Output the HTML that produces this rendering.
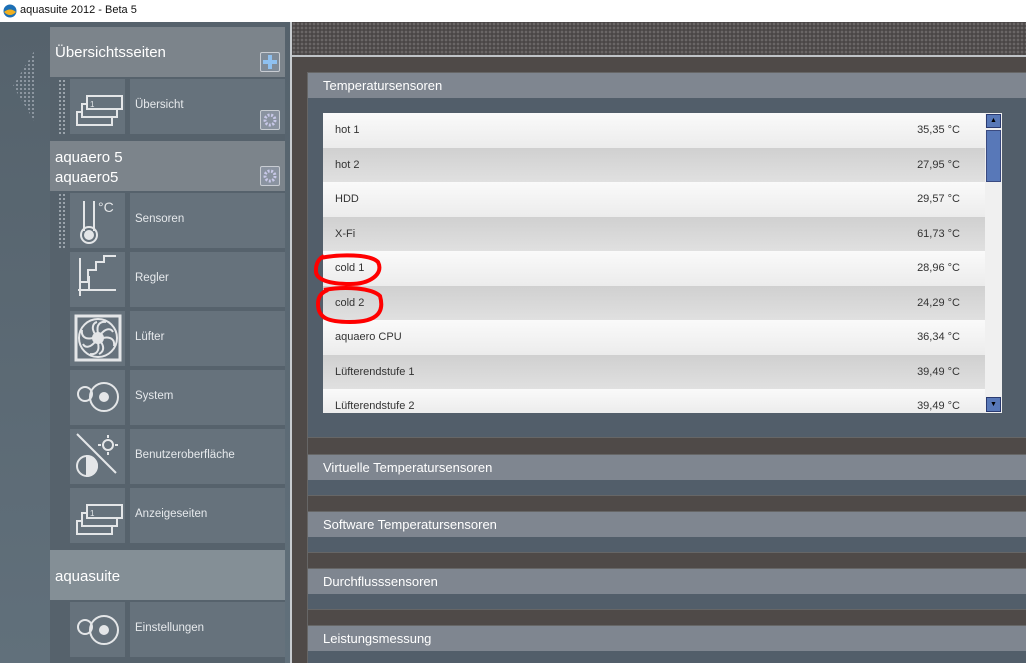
<!DOCTYPE html>
<html style="width:1026px;height:663px;overflow:hidden;background:#4f4a48"><head><meta charset="utf-8"><style>
*{margin:0;padding:0;box-sizing:border-box}
body{width:1026px;height:663px;overflow:hidden;position:relative;font-family:"Liberation Sans","DejaVu Sans",sans-serif;background:#4f4a48}
.a{position:absolute}
.tb{left:0;top:0;width:1026px;height:22px;background:#fff;font-size:11px;color:#111;padding:4px 0 0 20px}
.side{left:0;top:22px;width:290px;height:641px;background:linear-gradient(#55626c,#61707b)}
.col{left:50px;top:22px;width:235px;height:641px;background:#56626c}
.gh{left:50px;width:235px;height:50px;background:#7c848b;color:#fff;font-size:15px;padding:15px 0 0 5px;line-height:20px}
.ib{left:70px;width:55px;height:55px;background:#66727c}
.lb{left:130px;width:155px;height:55px;background:#66727c;color:#e6e9ec;font-size:11.5px;padding-top:20px;padding-left:5px}
.btn{width:20px;height:20px;border:1px solid #c8ccd2;border-radius:2px;background:#8a93a0}
.dots{background-image:radial-gradient(#9aa3ab 40%,transparent 45%);background-size:4px 4px}
.ph{left:307px;width:719px;height:26px;background:#7f8690;color:#fff;font-size:13px;padding:5px 0 0 16px;border-top:1px solid #666}
.pb{left:307px;width:719px;background:#525e6a}
.row{position:absolute;left:323px;width:662px;height:34.5px;font-size:11px;color:#333;padding:11px 0 0 12px}
.row span{position:absolute;right:25px;top:11px}
.r0{background:linear-gradient(#fafafa,#ececec)}
.r1{background:linear-gradient(#d0d0d0,#e0e0e0)}
svg{position:absolute}
</style></head><body>
<div class="a tb"><svg width="14" height="14" style="left:3px;top:4px"><circle cx="7" cy="7" r="6.5" fill="#1c6fb5"/><path d="M1 8 Q7 3 13 8 Q7 14 1 8z" fill="#f0b020"/></svg>aquasuite 2012 - Beta 5</div>
<div class="a side"></div>
<svg width="30" height="80" style="left:12px;top:48px"><defs><pattern id="p" width="4" height="4" patternUnits="userSpaceOnUse"><rect width="2" height="2" fill="#8c96a0"/></pattern></defs><polygon points="24,0 24,76 1,38" fill="url(#p)"/></svg>
<div class="a col"></div>
<div class="a" style="left:290px;top:22px;width:2px;height:641px;background:#c8ccd0"></div>
<div class="a" style="left:292px;top:22px;width:734px;height:33px;background-color:#4a4646;background-image:radial-gradient(#6a6666 45%,transparent 50%);background-size:4px 4px"></div>
<div class="a" style="left:292px;top:55px;width:734px;height:2px;background:#c0c4c8"></div>

<div class="a gh" style="top:27px;padding-top:16px">Übersichtsseiten</div>
<div class="a btn" style="left:260px;top:52px;background:#7f8b98"><svg width="18" height="18"><path d="M9 2V16M2 9H16" stroke="#8ec0f0" stroke-width="4"/></svg></div>
<div class="a dots" style="left:58px;top:79px;width:8px;height:55px"></div>
<div class="a ib" style="top:79px"></div><div class="a lb" style="top:79px">Übersicht</div>
<div class="a btn" style="left:260px;top:110px"><svg width="18" height="18"><circle cx="9" cy="9" r="5" fill="none" stroke="#c8c8e8" stroke-width="3" stroke-dasharray="2 1.5"/></svg></div>

<div class="a gh" style="top:141px;padding-top:7px">aquaero 5<br>aquaero5</div>
<div class="a btn" style="left:260px;top:166px"><svg width="18" height="18"><circle cx="9" cy="9" r="5" fill="none" stroke="#c8c8e8" stroke-width="3" stroke-dasharray="2 1.5"/></svg></div>
<div class="a dots" style="left:58px;top:193px;width:8px;height:55px"></div>
<div class="a ib" style="top:193px"></div><div class="a lb" style="top:193px">Sensoren</div>
<div class="a ib" style="top:252px"></div><div class="a lb" style="top:252px">Regler</div>
<div class="a ib" style="top:311px"></div><div class="a lb" style="top:311px">Lüfter</div>
<div class="a ib" style="top:370px"></div><div class="a lb" style="top:370px">System</div>
<div class="a ib" style="top:429px"></div><div class="a lb" style="top:429px">Benutzeroberfläche</div>
<div class="a ib" style="top:488px"></div><div class="a lb" style="top:488px">Anzeigeseiten</div>
<div class="a gh" style="top:550px;background:#848f96;padding-top:17px">aquasuite</div>
<div class="a ib" style="top:602px"></div><div class="a lb" style="top:602px">Einstellungen</div>

<svg width="55" height="600" style="left:70px;top:79px" fill="none" stroke="#e4e6e8" stroke-width="2">
<g><rect x="7" y="33" width="35" height="13"/><rect x="12" y="25" width="35" height="13" fill="#66727c"/><rect x="17" y="17" width="35" height="13" fill="#66727c"/><text x="20" y="28" font-size="8" fill="#e4e6e8" stroke="none">1</text></g>
<g transform="translate(0,114)"><path d="M14 8V38M24 8V38"/><circle cx="19" cy="42" r="8"/><circle cx="19" cy="42" r="4" fill="#e4e6e8"/><text x="28" y="19" font-size="14" fill="#e4e6e8" stroke="none" font-family="Liberation Sans">°C</text></g>
<g transform="translate(0,173)"><path d="M10 6V44M8 38H46M10 30H18V18H26V10H34V4H46M19 24V38" /></g>
<g transform="translate(0,232)"><rect x="6" y="5" width="44" height="44" stroke-width="3"/><circle cx="28" cy="27" r="19"/><circle cx="28" cy="27" r="5" fill="#e4e6e8"/>
<path d="M28 22C26 14 30 10 36 11M33 27C41 25 45 29 44 35M28 32C30 40 26 44 20 43M23 27C15 29 11 25 12 19M31 23C36 17 41 17 43 21M31 31C35 37 33 41 29 43M25 31C20 37 15 37 13 33M25 23C21 17 23 12 27 11"/></g>
<g transform="translate(0,291)"><circle cx="15" cy="24" r="7"/><circle cx="34" cy="27" r="14"/><circle cx="34" cy="27" r="4" fill="#e4e6e8"/></g>
<g transform="translate(0,350)"><path d="M7 5L46 44"/><circle cx="17" cy="37" r="10"/><path d="M17 27A10 10 0 0 1 17 47Z" fill="#e4e6e8"/><circle cx="38" cy="16" r="5"/><path d="M38 6V9M38 23V26M28 16H31M45 16H48"/></g>
<g transform="translate(0,409)"><rect x="7" y="33" width="35" height="13"/><rect x="12" y="25" width="35" height="13" fill="#66727c"/><rect x="17" y="17" width="35" height="13" fill="#66727c"/><text x="20" y="28" font-size="8" fill="#e4e6e8" stroke="none">1</text></g>
<g transform="translate(0,523)"><circle cx="15" cy="25" r="7"/><circle cx="34" cy="28" r="14"/><circle cx="34" cy="28" r="4" fill="#e4e6e8"/></g>
</svg>

<div class="a ph" style="top:72px">Temperatursensoren</div>
<div class="a pb" style="top:98px;height:340px;border-bottom:1px solid #666"></div>
<div class="row r0" style="top:113px">hot 1<span>35,35 °C</span></div>
<div class="row r1" style="top:147.5px">hot 2<span>27,95 °C</span></div>
<div class="row r0" style="top:182px">HDD<span>29,57 °C</span></div>
<div class="row r1" style="top:216.5px">X-Fi<span>61,73 °C</span></div>
<div class="row r0" style="top:251px">cold 1<span>28,96 °C</span></div>
<div class="row r1" style="top:285.5px">cold 2<span>24,29 °C</span></div>
<div class="row r0" style="top:320px">aquaero CPU<span>36,34 °C</span></div>
<div class="row r1" style="top:354.5px">Lüfterendstufe 1<span>39,49 °C</span></div>
<div class="row r0" style="top:389px;height:24px;overflow:hidden">Lüfterendstufe 2<span>39,49 °C</span></div>
<div class="a" style="left:985px;top:113px;width:17px;height:300px;background:#f0f0f0"></div>
<div class="a" style="left:986px;top:114px;width:15px;height:14px;background:#5878b8;border:1px solid #2a3a70;color:#000;font-size:7px;text-align:center;line-height:12px">▲</div>
<div class="a" style="left:986px;top:130px;width:15px;height:52px;background:#5878b8;border:1px solid #3a4a80"></div>
<div class="a" style="left:986px;top:397px;width:15px;height:15px;background:#5878b8;border:1px solid #2a3a70;color:#000;font-size:7px;text-align:center;line-height:13px">▼</div>
<svg width="100" height="80" style="left:310px;top:252px" fill="none" stroke="#ff0000" stroke-width="4"><path d="M10 6C30 2 60 2 68 10C74 22 60 32 40 32C20 32 5 28 6 18C6 10 10 6 14 4"/><path d="M14 38C35 34 62 36 70 44C74 58 70 70 40 70C18 70 8 66 8 52C8 44 12 40 18 38"/></svg>

<div class="a ph" style="top:454px">Virtuelle Temperatursensoren</div>
<div class="a pb" style="top:480px;height:16px;border-bottom:1px solid #666"></div>
<div class="a ph" style="top:511px">Software Temperatursensoren</div>
<div class="a pb" style="top:537px;height:16px;border-bottom:1px solid #666"></div>
<div class="a ph" style="top:568px">Durchflusssensoren</div>
<div class="a pb" style="top:594px;height:16px;border-bottom:1px solid #666"></div>
<div class="a ph" style="top:625px">Leistungsmessung</div>
<div class="a pb" style="top:651px;height:12px"></div>
<div class="a" style="left:307px;top:72px;width:1px;height:591px;background:#666"></div>
</body></html>
